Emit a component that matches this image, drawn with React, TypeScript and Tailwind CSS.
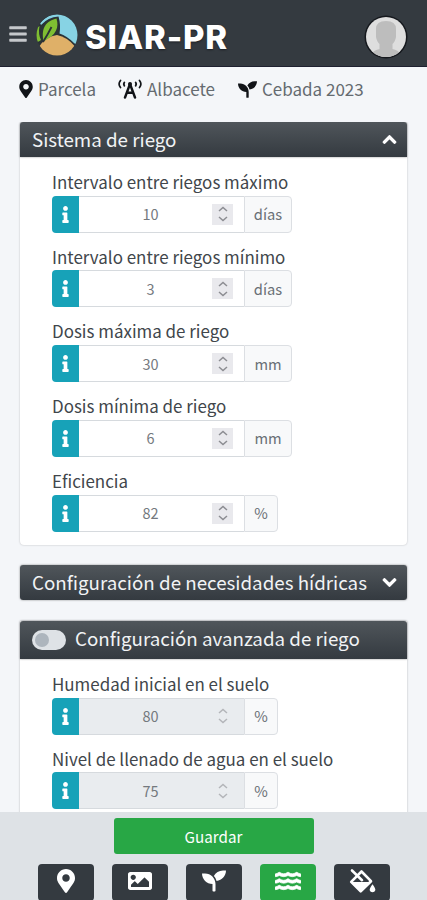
import type { ReactNode } from "react";
import {
  FaBars,
  FaChevronDown,
  FaChevronUp,
  FaImage,
  FaInfo,
  FaMapMarkerAlt,
  FaSeedling,
  FaWater,
} from "react-icons/fa";

function Logo() {
  return (
    <svg viewBox="0 0 42 42" className="h-[42px] w-[42px] shrink-0">
      <defs>
        <clipPath id="disc">
          <circle cx="21" cy="21" r="20.5" />
        </clipPath>
      </defs>
      <g clipPath="url(#disc)">
        <rect width="42" height="42" fill="#2b3336" />
        <path d="M4 9 Q12 0 21 0 H42 V32 L38 29 Q31 22 23.500 19.500 Q25 11 22.500 2.500 Q12 3 5 11Z" fill="#87d3e4" />
        <path d="M2 34 Q10 22 21 21 Q31 23 38.500 32 L34 42 H6Z" fill="#dfb068" />
        <path d="M20.500 4.500 C23 13 21 20.500 7.500 27.500 C5.500 17 7 8 20.500 4.500Z" fill="#7fbe32" />
        <path d="M3.500 12 Q2 20 5 26 Q3 28 0 28 L0 14Z" fill="#7fbe32" />
        <path d="M7 28 Q12 20 15.500 13" stroke="#2b3336" strokeWidth="1.800" fill="none" />
      </g>
    </svg>
  );
}

function Avatar() {
  return (
    <svg viewBox="0 0 44 44" className="h-11 w-11 shrink-0">
      <defs>
        <clipPath id="face">
          <circle cx="22" cy="22" r="20" />
        </clipPath>
      </defs>
      <circle cx="22" cy="22" r="21.500" fill="#15181d" />
      <circle cx="22" cy="22" r="20" fill="#dedede" />
      <path
        clipPath="url(#face)"
        d="M12 14 Q12 6 22 6 Q32 6 32 14 V22 Q31 27 28.500 29 V34 Q34 35 37 39 V44 H7 V39 Q10 35 15.500 34 V29 Q13 27 12 22Z"
        fill="#bdbdbd"
      />
    </svg>
  );
}

function TowerIcon() {
  return (
    <svg
      viewBox="0 0 24 20"
      className="mr-[5px] h-5 w-6 shrink-0 text-[#111418]"
      fill="none"
      stroke="currentColor"
      strokeLinecap="round"
    >
      <path d="M2.500 1.500Q-.3 5 2.500 8.500M21.500 1.500Q24.300 5 21.500 8.500" strokeWidth="1.700" />
      <path d="M6.300 3.500Q5.200 5 6.300 6.700M17.700 3.500Q18.800 5 17.700 6.700" strokeWidth="1.900" />
      <path d="M12 5 7 18.500M12 5 17 18.500M9 13.700H15" strokeWidth="2.400" />
      <circle cx="12" cy="5" r="2" fill="currentColor" stroke="none" />
    </svg>
  );
}

function FillDripIcon() {
  return (
    <svg viewBox="0 0 28 26" className="h-[26px] w-7" fill="none" stroke="currentColor">
      <path d="M13.500 3.500 23 13.200 12.700 23.300 3.200 13.800Z" strokeWidth="2.600" strokeLinejoin="round" />
      <path d="M3.500 14H22.500L12.700 23.300Z" fill="currentColor" stroke="none" />
      <path d="M4 2.500 14 12.200" strokeWidth="2.600" strokeLinecap="round" />
      <path d="M24.500 16.200Q27.800 20.500 27.300 22.200A2.900 2.900 0 0 1 21.700 22.200Q21.300 20.500 24.500 16.200Z" fill="currentColor" stroke="none" />
    </svg>
  );
}

function Spinner({ disabled }: { disabled?: boolean }) {
  return (
    <span className={`mr-[11px] flex h-[21px] w-[21px] items-center justify-center ${disabled ? "" : "bg-[#e9e9ed]"}`}>
      <svg
        viewBox="0 0 10 16"
        className={`h-4 w-[10px] ${disabled ? "text-[#b3b5b9]" : "text-[#8c8d92]"}`}
        fill="none"
        stroke="currentColor"
        strokeWidth="1.500"
      >
        <path d="M1 5 5 1.500 9 5M1 11 5 14.500 9 11" />
      </svg>
    </span>
  );
}

type FieldProps = { label: string; value: string; unit: string; wide?: boolean; disabled?: boolean };

function Field({ label, value, unit, wide, disabled }: FieldProps) {
  return (
    <div className="h-[74.700px]">
      <div className="h-[24px] text-[16.950px] leading-[24px] whitespace-nowrap text-[#41464b]">{label}</div>
      <div className={`mt-[1.800px] flex h-[37px] ${wide ? "w-[240px]" : "w-[226px]"}`}>
        <span className="flex w-[27px] items-center justify-center rounded-l-[4px] bg-[#17a2b8] text-[17px] text-white">
          <FaInfo />
        </span>
        <span
          className={`flex w-[165px] items-center border-y border-[#d6dade] ${disabled ? "bg-[#e9ecef]" : "bg-white"}`}
        >
          <span className="ml-[20px] flex-1 text-center text-[14.500px] text-[#74797e]">{value}</span>
          <span className="flex w-[42px] justify-end">
            <Spinner disabled={disabled} />
          </span>
        </span>
        <span className="flex flex-1 items-center justify-center rounded-r-[4px] border border-[#dcdfe3] bg-[#f8f9fa] text-[14.700px] text-[#6a7076]">
          {unit}
        </span>
      </div>
    </div>
  );
}

function CardHeader({ children, rounded = "rounded-t-[3px]" }: { children: ReactNode; rounded?: string }) {
  return (
    <div
      className={`flex items-center bg-linear-to-b from-[#50565b] to-[#343a40] pr-[10px] pb-px pl-3 text-[18.750px] whitespace-nowrap text-[#f1f3f5] shadow-[0_0_2px_rgba(0,0,0,0.5)] ${rounded} h-full`}
    >
      {children}
    </div>
  );
}

function NavButton({ active, children }: { active?: boolean; children: ReactNode }) {
  return (
    <div
      className={`flex h-[37px] w-14 items-center justify-center rounded-[4px] pb-[3px] text-[24px] text-white ${active ? "bg-[#28a745]" : "bg-[#343a40]"}`}
    >
      {children}
    </div>
  );
}

export default function App() {
  return (
    <div className="flex h-[900px] w-[427px] flex-col overflow-hidden bg-[#f4f6f9] font-['Noto_Sans_CJK_SC',sans-serif]">
      <header className="flex h-[67px] shrink-0 items-center border-b border-[#1e2030] bg-[#343a40] pt-[5px] pr-[19px] pl-[9px]">
        <FaBars className="mb-1 h-5 w-[18px] text-[#c5c8cb]" />
        <div className="mb-px ml-[9px]">
          <Logo />
        </div>
        <span className="mt-[4px] ml-[7px] font-['Inter',sans-serif] text-[33px] leading-none font-extrabold tracking-[0.800px] text-white [text-shadow:0_1px_2px_#1b1e22]">
          SIAR-PR
        </span>
        <div className="mt-[2px] ml-auto">
          <Avatar />
        </div>
      </header>

      <div className="flex h-[55px] shrink-0 items-center pb-[11px] text-[17px] text-[#656b70]">
        <div className="ml-[19px] flex w-[99px] items-center whitespace-nowrap">
          <FaMapMarkerAlt className="mr-[5px] h-[18px] w-[14px] text-[#111418]" />
          Parcela
        </div>
        <div className="flex w-[120px] items-center whitespace-nowrap">
          <TowerIcon />
          Albacete
        </div>
        <div className="flex items-center whitespace-nowrap">
          <FaSeedling className="mr-[5px] h-[19px] w-[19px] text-[#111418]" />
          Cebada 2023
        </div>
      </div>

      <main className="min-h-0 flex-1 overflow-hidden px-5">
        <section className="h-[423px] rounded-[4px] bg-white shadow-[0_0_2px_rgba(0,0,0,0.25)]">
          <div className="h-[35px]">
            <CardHeader>
              <span>Sistema de riego</span>
              <FaChevronUp className="ml-auto h-[15px] w-[15px] stroke-current stroke-[36] text-white" />
            </CardHeader>
          </div>
          <div className="pt-[13px] pl-8">
            <Field label="Intervalo entre riegos máximo" value="10" unit="días" wide />
            <Field label="Intervalo entre riegos mínimo" value="3" unit="días" wide />
            <Field label="Dosis máxima de riego" value="30" unit="mm" wide />
            <Field label="Dosis mínima de riego" value="6" unit="mm" wide />
            <Field label="Eficiencia" value="82" unit="%" />
          </div>
        </section>

        <section className="mt-[20px] h-[35px]">
          <CardHeader rounded="rounded-[3px]">
            <span>Configuración de necesidades hídricas</span>
            <FaChevronDown className="ml-auto h-[15px] w-[15px] stroke-current stroke-[36] text-white" />
          </CardHeader>
        </section>

        <section className="mt-[21px] h-[240px] bg-white shadow-[0_0_2px_rgba(0,0,0,0.25)]">
          <div className="h-[38px]">
            <CardHeader>
              <span className="mr-[9px] flex h-5 w-[34px] items-center rounded-full bg-[#dee2e6] pl-[3px]">
                <span className="h-[14px] w-[14px] rounded-full bg-[#adb5bd]" />
              </span>
              <span className="-mt-[2px]">Configuración avanzada de riego</span>
            </CardHeader>
          </div>
          <div className="pt-[13px] pl-8">
            <Field label="Humedad inicial en el suelo" value="80" unit="%" disabled />
            <Field label="Nivel de llenado de agua en el suelo" value="75" unit="%" disabled />
          </div>
        </section>
      </main>

      <footer className="h-[88px] shrink-0 bg-[#dee2e6] pt-[6px]">
        <div className="mx-auto flex h-9 w-[200px] items-center justify-center rounded-[3px] bg-[#28a745] text-[15.200px] text-white">
          Guardar
        </div>
        <nav className="mt-[10px] ml-[38px] flex gap-[18px]">
          <NavButton>
            <FaMapMarkerAlt />
          </NavButton>
          <NavButton>
            <FaImage />
          </NavButton>
          <NavButton>
            <FaSeedling />
          </NavButton>
          <NavButton active>
            <FaWater className="h-[26px] w-[26px] stroke-current stroke-[16]" />
          </NavButton>
          <NavButton>
            <FillDripIcon />
          </NavButton>
        </nav>
      </footer>
    </div>
  );
}
